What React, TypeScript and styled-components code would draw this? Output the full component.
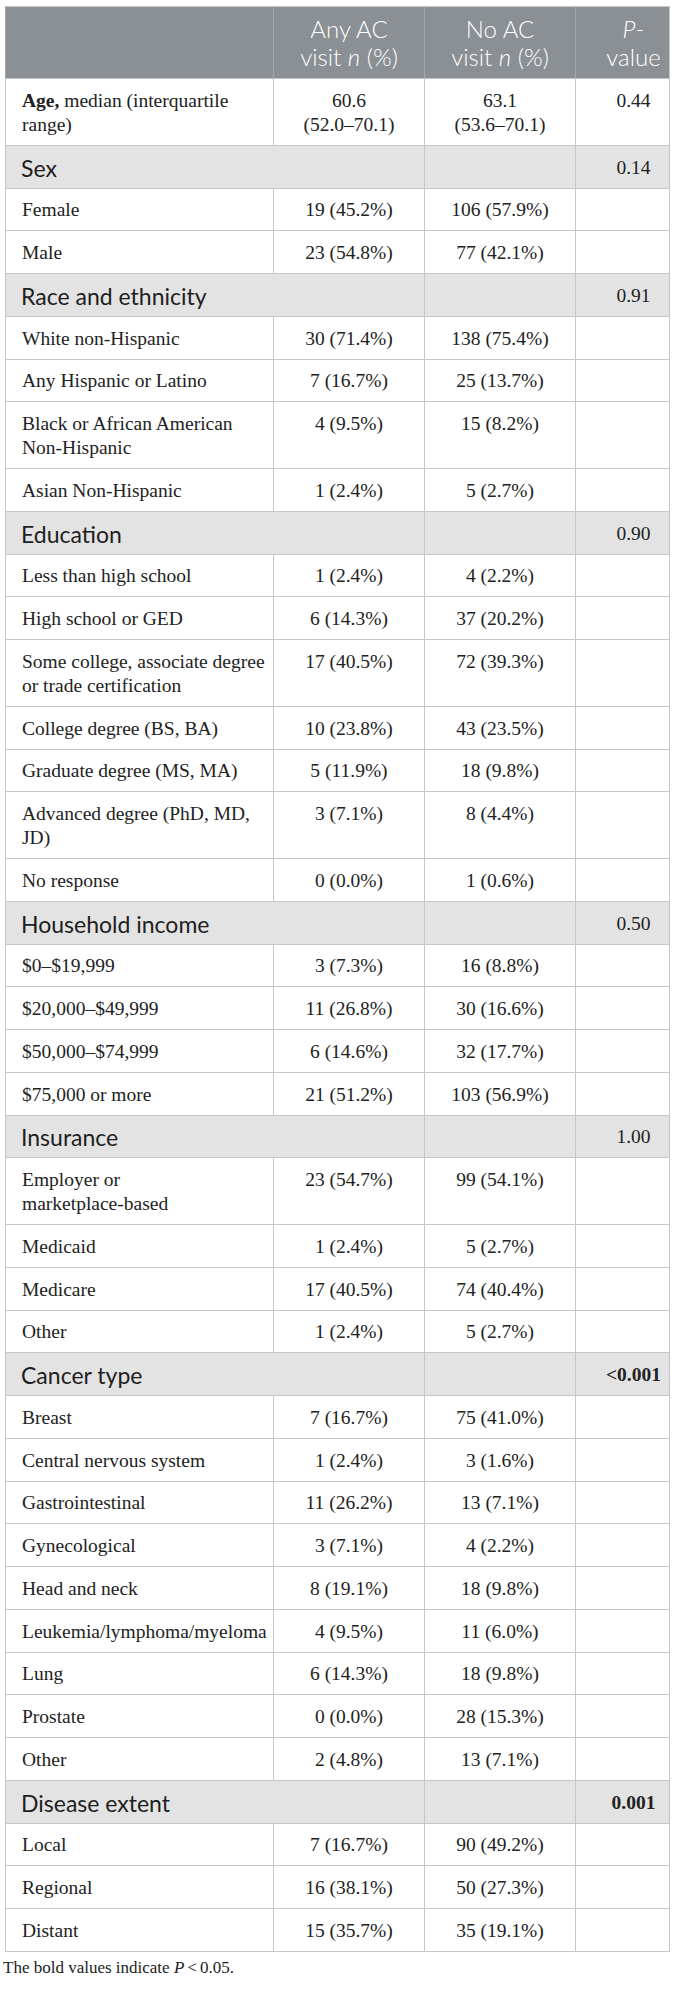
import React from "react";
import styled, { createGlobalStyle } from "styled-components";

const GlobalStyle = createGlobalStyle`
  html, body { margin: 0; padding: 0; background: #ffffff; }
  body { font-family: "Liberation Serif", "Times New Roman", serif; color: #222; }
`;

const Page = styled.div`
  padding: 6px 5px 0 5px;
  width: 664px;
`;

const Table = styled.table`
  width: 664px;
  border-collapse: collapse;
  table-layout: fixed;
  border: 1.5px solid #c6c6c6;
`;

const HeadRow = styled.tr`
  background: #8b9094;
`;

const HeadCell = styled.th<{ $p?: boolean }>`
  font-family: Lato, "Open Sans", sans-serif;
  font-weight: 300;
  font-size: 24px;
  line-height: 28px;
  color: #ffffff;
  text-align: center;
  vertical-align: top;
  padding: ${(p) => (p.$p ? "8px 0 7px 22px" : "8px 4px 7px")};
  border-left: 1.5px solid #a3a8ab;
  border-bottom: 1.5px solid #c6c6c6;
`;

const Row = styled.tr``;

const Cell = styled.td<{ $center?: boolean; $p?: boolean; $bold?: boolean }>`
  font-family: "Liberation Serif", "Times New Roman", serif;
  font-size: 19.5px;
  line-height: 24px;
  vertical-align: top;
  white-space: nowrap;
  padding: ${(p) =>
    p.$p ? "9.75px 0 8px 22px" : p.$center ? "9.75px 4px 8px" : "9.75px 4px 8px 16px"};
  text-align: ${(p) => (p.$center || p.$p ? "center" : "left")};
  font-weight: ${(p) => (p.$bold ? 700 : 400)};
  border: 1.5px solid #c6c6c6;
  color: #222;
`;

const GroupRow = styled.tr`
  background: #e3e3e3;
`;

const GroupLabel = styled.td`
  font-family: Lato, "Open Sans", sans-serif;
  font-size: 23px;
  line-height: 24px;
  vertical-align: top;
  padding: 9.75px 4px 8px 15px;
  border: 1.5px solid #c6c6c6;
  color: #1e1e1e;
`;

const Footnote = styled.p`
  margin: 6px 0 0 -2px;
  font-family: "Liberation Serif", "Times New Roman", serif;
  font-size: 17px;
  line-height: 20px;
  color: #222;
`;

const Lt = styled.span`
  margin: 0 3px;
`;

type Item =
  | { kind: "group"; label: string; p: string; bold?: boolean }
  | { kind: "row"; label: React.ReactNode; a: React.ReactNode; b: React.ReactNode; p?: string };

const data: Item[] = [
  {
    kind: "row",
    label: (
      <>
        <b>Age,</b> median (interquartile
        <br />
        range)
      </>
    ),
    a: (
      <>
        60.6
        <br />
        (52.0–70.1)
      </>
    ),
    b: (
      <>
        63.1
        <br />
        (53.6–70.1)
      </>
    ),
    p: "0.44",
  },
  { kind: "group", label: "Sex", p: "0.14" },
  { kind: "row", label: "Female", a: "19 (45.2%)", b: "106 (57.9%)" },
  { kind: "row", label: "Male", a: "23 (54.8%)", b: "77 (42.1%)" },
  { kind: "group", label: "Race and ethnicity", p: "0.91" },
  { kind: "row", label: "White non-Hispanic", a: "30 (71.4%)", b: "138 (75.4%)" },
  { kind: "row", label: "Any Hispanic or Latino", a: "7 (16.7%)", b: "25 (13.7%)" },
  {
    kind: "row",
    label: (
      <>
        Black or African American
        <br />
        Non-Hispanic
      </>
    ),
    a: "4 (9.5%)",
    b: "15 (8.2%)",
  },
  { kind: "row", label: "Asian Non-Hispanic", a: "1 (2.4%)", b: "5 (2.7%)" },
  { kind: "group", label: "Education", p: "0.90" },
  { kind: "row", label: "Less than high school", a: "1 (2.4%)", b: "4 (2.2%)" },
  { kind: "row", label: "High school or GED", a: "6 (14.3%)", b: "37 (20.2%)" },
  {
    kind: "row",
    label: (
      <>
        Some college, associate degree
        <br />
        or trade certification
      </>
    ),
    a: "17 (40.5%)",
    b: "72 (39.3%)",
  },
  { kind: "row", label: "College degree (BS, BA)", a: "10 (23.8%)", b: "43 (23.5%)" },
  { kind: "row", label: "Graduate degree (MS, MA)", a: "5 (11.9%)", b: "18 (9.8%)" },
  {
    kind: "row",
    label: (
      <>
        Advanced degree (PhD, MD,
        <br />
        JD)
      </>
    ),
    a: "3 (7.1%)",
    b: "8 (4.4%)",
  },
  { kind: "row", label: "No response", a: "0 (0.0%)", b: "1 (0.6%)" },
  { kind: "group", label: "Household income", p: "0.50" },
  { kind: "row", label: "$0–$19,999", a: "3 (7.3%)", b: "16 (8.8%)" },
  { kind: "row", label: "$20,000–$49,999", a: "11 (26.8%)", b: "30 (16.6%)" },
  { kind: "row", label: "$50,000–$74,999", a: "6 (14.6%)", b: "32 (17.7%)" },
  { kind: "row", label: "$75,000 or more", a: "21 (51.2%)", b: "103 (56.9%)" },
  { kind: "group", label: "Insurance", p: "1.00" },
  {
    kind: "row",
    label: (
      <>
        Employer or
        <br />
        marketplace-based
      </>
    ),
    a: "23 (54.7%)",
    b: "99 (54.1%)",
  },
  { kind: "row", label: "Medicaid", a: "1 (2.4%)", b: "5 (2.7%)" },
  { kind: "row", label: "Medicare", a: "17 (40.5%)", b: "74 (40.4%)" },
  { kind: "row", label: "Other", a: "1 (2.4%)", b: "5 (2.7%)" },
  { kind: "group", label: "Cancer type", p: "<0.001", bold: true },
  { kind: "row", label: "Breast", a: "7 (16.7%)", b: "75 (41.0%)" },
  { kind: "row", label: "Central nervous system", a: "1 (2.4%)", b: "3 (1.6%)" },
  { kind: "row", label: "Gastrointestinal", a: "11 (26.2%)", b: "13 (7.1%)" },
  { kind: "row", label: "Gynecological", a: "3 (7.1%)", b: "4 (2.2%)" },
  { kind: "row", label: "Head and neck", a: "8 (19.1%)", b: "18 (9.8%)" },
  { kind: "row", label: "Leukemia/lymphoma/myeloma", a: "4 (9.5%)", b: "11 (6.0%)" },
  { kind: "row", label: "Lung", a: "6 (14.3%)", b: "18 (9.8%)" },
  { kind: "row", label: "Prostate", a: "0 (0.0%)", b: "28 (15.3%)" },
  { kind: "row", label: "Other", a: "2 (4.8%)", b: "13 (7.1%)" },
  { kind: "group", label: "Disease extent", p: "0.001", bold: true },
  { kind: "row", label: "Local", a: "7 (16.7%)", b: "90 (49.2%)" },
  { kind: "row", label: "Regional", a: "16 (38.1%)", b: "50 (27.3%)" },
  { kind: "row", label: "Distant", a: "15 (35.7%)", b: "35 (19.1%)" },
];

export default function App() {
  return (
    <>
      <GlobalStyle />
      <Page>
        <Table>
          <colgroup>
            <col style={{ width: 268 }} />
            <col style={{ width: 151 }} />
            <col style={{ width: 151 }} />
            <col style={{ width: 94 }} />
          </colgroup>
          <thead>
            <HeadRow>
              <HeadCell />
              <HeadCell>
                Any AC
                <br />
                visit <i>n</i> (%)
              </HeadCell>
              <HeadCell>
                No AC
                <br />
                visit <i>n</i> (%)
              </HeadCell>
              <HeadCell $p>
                <i>P</i>-
                <br />
                value
              </HeadCell>
            </HeadRow>
          </thead>
          <tbody>
            {data.map((item, i) =>
              item.kind === "group" ? (
                <GroupRow key={i}>
                  <GroupLabel colSpan={2}>{item.label}</GroupLabel>
                  <Cell $center />
                  <Cell $p $bold={item.bold}>
                    {item.p}
                  </Cell>
                </GroupRow>
              ) : (
                <Row key={i}>
                  <Cell>{item.label}</Cell>
                  <Cell $center>{item.a}</Cell>
                  <Cell $center>{item.b}</Cell>
                  <Cell $p>{item.p ?? ""}</Cell>
                </Row>
              )
            )}
          </tbody>
        </Table>
        <Footnote>
          The bold values indicate <i>P</i>
          <Lt>&lt;</Lt>0.05.
        </Footnote>
      </Page>
    </>
  );
}
